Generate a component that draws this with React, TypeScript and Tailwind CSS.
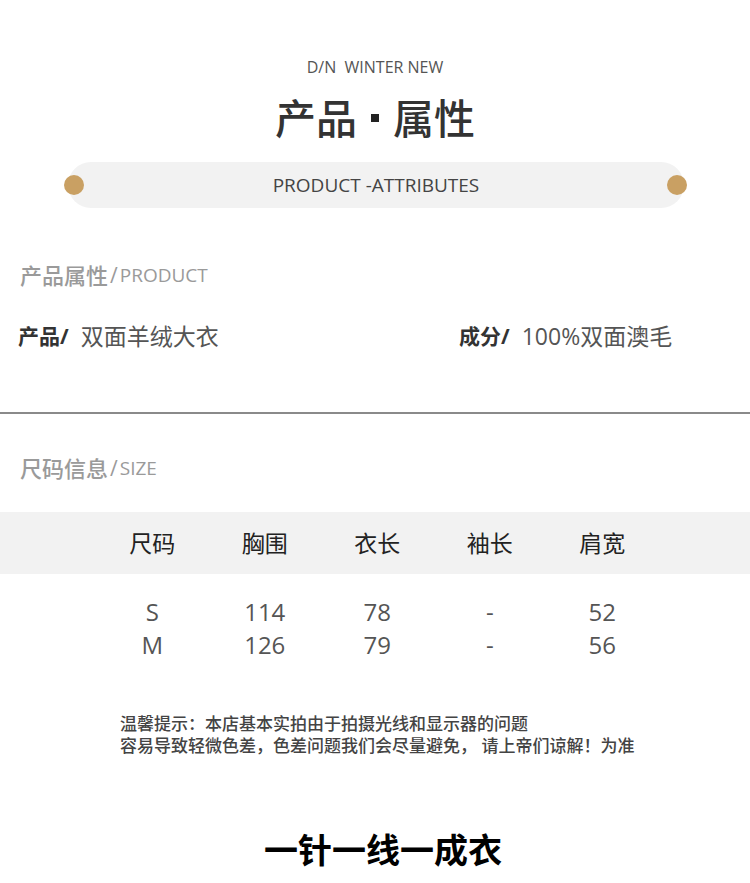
const cjk = 'font-["Open_Sans","Noto_Sans_CJK_SC",sans-serif]';

const columns = ['尺码', '胸围', '衣长', '袖长', '肩宽'];

const sizes = [
  ['S', '114', '78', '-', '52'],
  ['M', '126', '79', '-', '56'],
];

function SectionLabel({ zh, en }: { zh: string; en: string }) {
  return (
    <div className="h-[28px] pl-[20px] flex items-center text-[#9a9a9a]">
      <span className="text-[22px] leading-[28px] font-medium">{zh}</span>
      <span className="text-[21px] leading-[28px] mx-[2px]">/</span>
      <span className="text-[19px] leading-[28px]">{en}</span>
    </div>
  );
}

export default function App() {
  return (
    <div className={`w-[750px] h-[883px] overflow-hidden bg-white ${cjk}`}>
      {/* heading */}
      <div className="pt-[57px] h-[77px] text-center text-[16px] leading-[20px] text-[#555] whitespace-pre">
        D/N  WINTER NEW
      </div>
      <div className="mt-[17px] h-[48px] flex items-center justify-center text-[41px] leading-[48px] font-medium text-[#333]">
        <span>产品</span>
        <span className="mx-[14px] inline-block w-[8px] h-[8px] bg-[#222]" />
        <span>属性</span>
      </div>

      {/* pill */}
      <div className="relative mt-[20px] ml-[68px] mr-[66px] h-[46px] rounded-full bg-[#f2f2f2] flex items-center justify-center">
        <span className="text-[19px] leading-[24px] text-[#444]">PRODUCT -ATTRIBUTES</span>
        <span className="absolute left-[-4px] top-[13px] w-[20px] h-[20px] rounded-full bg-[#c9a063]" />
        <span className="absolute right-[-3px] top-[13px] w-[20px] h-[20px] rounded-full bg-[#c9a063]" />
      </div>

      {/* product info */}
      <div className="mt-[53px]">
        <SectionLabel zh="产品属性" en="PRODUCT" />
      </div>
      <div className="mt-[33px] h-[28px] flex items-center">
        <div className="pl-[18px] w-[459px] flex items-center">
          <span className="text-[21px] leading-[28px] font-bold text-[#333]">产品/</span>
          <span className="ml-[12px] text-[23px] leading-[28px] text-[#555]">双面羊绒大衣</span>
        </div>
        <div className="flex items-center">
          <span className="text-[21px] leading-[28px] font-bold text-[#333]">成分/</span>
          <span className="ml-[12px] text-[23px] leading-[28px] text-[#555]">100%双面澳毛</span>
        </div>
      </div>

      <div className="mt-[62px] h-[2px] bg-[#8a8a8a]" />

      {/* size */}
      <div className="mt-[40px]">
        <SectionLabel zh="尺码信息" en="SIZE" />
      </div>
      <div className="mt-[30px] h-[62px] bg-[#f2f2f2] flex items-center pl-[96px]">
        {columns.map((c) => (
          <div key={c} className="w-[112.5px] text-center text-[23px] leading-[30px] text-[#222]">
            {c}
          </div>
        ))}
      </div>
      <div className="mt-[21px] pl-[96px]">
        {sizes.map((row) => (
          <div key={row[0]} className="flex h-[33px] items-center">
            {row.map((v, i) => (
              <div key={i} className="w-[112.5px] text-center text-[24px] leading-[33px] text-[#555]">
                {v}
              </div>
            ))}
          </div>
        ))}
      </div>

      {/* notice */}
      <div className="mt-[52px] pl-[120px] text-[17px] leading-[22px] font-medium text-[#444]">
        <div className="h-[22px]">温馨提示：本店基本实拍由于拍摄光线和显示器的问题</div>
        <div className="h-[22px] whitespace-pre">容易导致轻微色差，色差问题我们会尽量避免， 请上帝们谅解！为准</div>
      </div>

      <div className="mt-[71px] h-[44px] pl-[16px] text-center text-[34px] leading-[44px] font-bold text-black">
        一针一线一成衣
      </div>
    </div>
  );
}
